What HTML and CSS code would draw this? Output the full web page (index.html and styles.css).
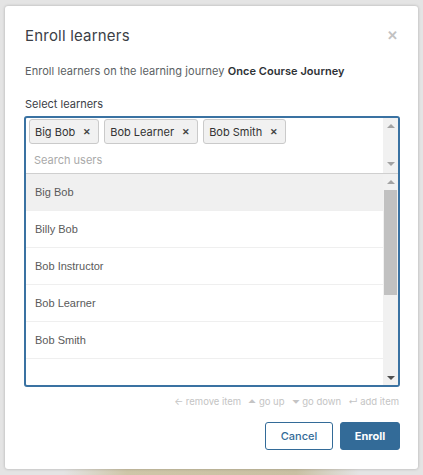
FILE: index.html
```html
<!DOCTYPE html>
<html>
<head>
<meta charset="utf-8">
<link rel="stylesheet" href="styles.css">
</head>
<body>
<div class="modal">
  <div class="header">
    <h2 class="title">Enroll learners</h2>
    <span class="close">&#x2715;</span>
  </div>
  <p class="desc">Enroll learners on the learning journey <b>Once Course Journey</b></p>
  <label class="label">Select learners</label>
  <div class="select">
    <div class="top">
      <div class="top-main">
        <div class="chips">
          <span class="chip">Big Bob <span class="x">&#x2715;</span></span>
          <span class="chip">Bob Learner <span class="x">&#x2715;</span></span>
          <span class="chip">Bob Smith <span class="x">&#x2715;</span></span>
        </div>
        <div class="search">Search users</div>
      </div>
      <div class="sbar">
        <span class="arr up"></span>
        <span class="fill"></span>
        <span class="arr down"></span>
      </div>
    </div>
    <div class="list-wrap">
      <ul class="list">
        <li class="item active">Big Bob</li>
        <li class="item">Billy Bob</li>
        <li class="item">Bob Instructor</li>
        <li class="item">Bob Learner</li>
        <li class="item">Bob Smith</li>
      </ul>
      <div class="sbar">
        <span class="arr up"></span>
        <span class="thumb"></span>
        <span class="fill"></span>
        <span class="arr down"></span>
      </div>
    </div>
  </div>
  <div class="hints">
    <span>&#x2190; remove item</span>
    <span>&#x23F6; go up</span>
    <span>&#x23F7; go down</span>
    <span>&#x21B5; add item</span>
  </div>
  <div class="actions">
    <button class="btn cancel">Cancel</button>
    <button class="btn enroll">Enroll</button>
  </div>
</div>
</body>
</html>
```
FILE: styles.css
```css
* { box-sizing: border-box; }
html, body { margin: 0; padding: 0; }
body {
  width: 423px;
  height: 475px;
  font-family: Inter, "Liberation Sans", sans-serif;
  padding: 6px 5px 0 5px;
  overflow: hidden;
  background-color: #e4e4e4;
  background-image: linear-gradient(90deg, #e4e4e4 15%, #cfc6a8 30%, #c9c0a3 70%, #e4e4e4 85%);
  background-size: 100% 6px;
  background-position: 0 469px;
  background-repeat: no-repeat;
}
.modal {
  width: 413px;
  height: 463px;
  background: #fff;
  border-radius: 3px;
  box-shadow: 0 0 3px rgba(0,0,0,0.25);
  padding: 19px 18px 19px 19px;
  display: flex;
  flex-direction: column;
}
.header {
  display: flex;
  justify-content: space-between;
  align-items: center;
  height: 20px;
}
.title {
  margin: 0 0 0 1px;
  font-size: 15px;
  font-weight: 400;
  color: #3b4046;
  letter-spacing: 0.2px;
}
.close {
  color: #c2c2c2;
  font-size: 13px;
  font-weight: 700;
  margin-right: 2px;
}
.desc {
  margin: 19px 0 0 1px;
  font-size: 11px;
  line-height: 14px;
  color: #5b5f63;
  letter-spacing: 0.05px;
}
.desc b { color: #2e3236; font-weight: 600; }
.label {
  margin: 19px 0 0 1px;
  font-size: 11px;
  line-height: 14px;
  color: #3b4046;
  font-weight: 400;
}
.select {
  margin-top: 5px;
  height: 271px;
  border: 2px solid #3a72a2;
  border-radius: 3px;
  display: flex;
  flex-direction: column;
  overflow: hidden;
}
.top {
  height: 56px;
  border-bottom: 1px solid #cfcfcf;
  display: flex;
}
.top-main { flex: 1; padding: 1px 0 0 3px; }
.chips { display: flex; gap: 5px; }
.chip {
  height: 25px;
  display: flex;
  align-items: center;
  padding: 0 7px 0 5px;
  background: #f1f1f1;
  border: 1px solid #cacaca;
  border-radius: 3px;
  font-size: 11px;
  color: #333;
  font-weight: 400;
}
.chip .x { margin-left: 8px; font-size: 9px; font-weight: 600; color: #444; }
.search {
  margin: 9px 0 0 5px;
  font-size: 11px;
  color: #a9a9a9;
  line-height: 14px;
}
.sbar {
  width: 15px;
  background: #f1f1f1;
  display: flex;
  flex-direction: column;
  align-items: center;
}
.arr { width: 0; height: 0; border-left: 4px solid transparent; border-right: 4px solid transparent; }
.arr.up { border-bottom: 4px solid #a3a3a3; margin-top: 6px; }
.arr.down { border-top: 4px solid #a3a3a3; margin-bottom: 7px; }
.fill { flex: 1; }
.list-wrap { flex: 1; display: flex; }
.list { flex: 1; list-style: none; margin: 0; padding: 0; }
.item {
  height: 37px;
  display: flex;
  align-items: center;
  padding-left: 9px;
  font-family: "Liberation Sans", Arial, sans-serif;
  font-size: 11px;
  color: #5a5a5a;
  border-bottom: 1px solid #efefef;
}
.item.active { background: #f0f0f0; }
.list-wrap .sbar .arr.up { margin-top: 6px; }
.list-wrap .sbar .arr.down { border-top-color: #505050; margin-bottom: 5px; }
.thumb { width: 13px; height: 105px; background: #c1c1c1; margin-top: 6px; }
.hints {
  margin-top: 9px;
  display: flex;
  justify-content: flex-end;
  gap: 7px;
  font-size: 9.5px;
  color: #c4c4c4;
  line-height: 12px;
  padding-right: 1px;
}
.actions {
  margin-top: 14px;
  display: flex;
  justify-content: flex-end;
  gap: 7px;
}
.btn {
  height: 28px;
  border-radius: 3px;
  font-family: Inter, "Liberation Sans", sans-serif;
  font-size: 11px;
  font-weight: 500;
  padding: 0;
}
.cancel { width: 68px; background: #fff; border: 1px solid #336b98; color: #336b98; }
.enroll { width: 60px; background: #336b98; border: 1px solid #336b98; color: #fff; font-weight: 700; }
```
